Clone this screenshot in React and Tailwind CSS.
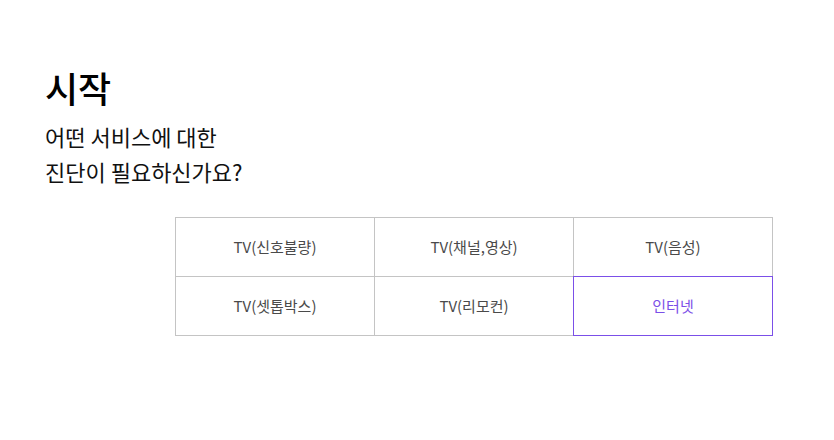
import { useState } from "react";

const items = [
  "TV(신호불량)",
  "TV(채널,영상)",
  "TV(음성)",
  "TV(셋톱박스)",
  "TV(리모컨)",
  "인터넷",
];

export default function App() {
  const [selected, setSelected] = useState(5);

  return (
    <div
      className="w-[834px] h-[440px] bg-white pl-[45px] pt-[62px]"
      style={{ fontFamily: '"Noto Sans CJK KR", "Noto Sans", sans-serif' }}
    >
      <h1 className="text-[36px] font-medium leading-[50px] text-black">시작</h1>
      <p className="mt-[7px] text-[22px] leading-[35px] text-[#111]">
        어떤 서비스에 대한
        <br />
        진단이 필요하신가요?
      </p>

      <div className="ml-[130px] mt-[28px] w-[598px] grid grid-cols-3 border-t border-l border-[#c4c4c4]">
        {items.map((label, i) => (
          <button
            key={label}
            onClick={() => setSelected(i)}
            className={
              i === selected
                ? "relative h-[59px] border-r border-b border-[#c4c4c4] text-[15px] text-[#7b4fe8]"
                : "relative h-[59px] border-r border-b border-[#c4c4c4] text-[15px] text-[#4a4a4a]"
            }
          >
            {i === selected && (
              <span className="absolute -left-px -top-px -right-px -bottom-px border border-[#7b4fe8] pointer-events-none" />
            )}
            {label}
          </button>
        ))}
      </div>
    </div>
  );
}
